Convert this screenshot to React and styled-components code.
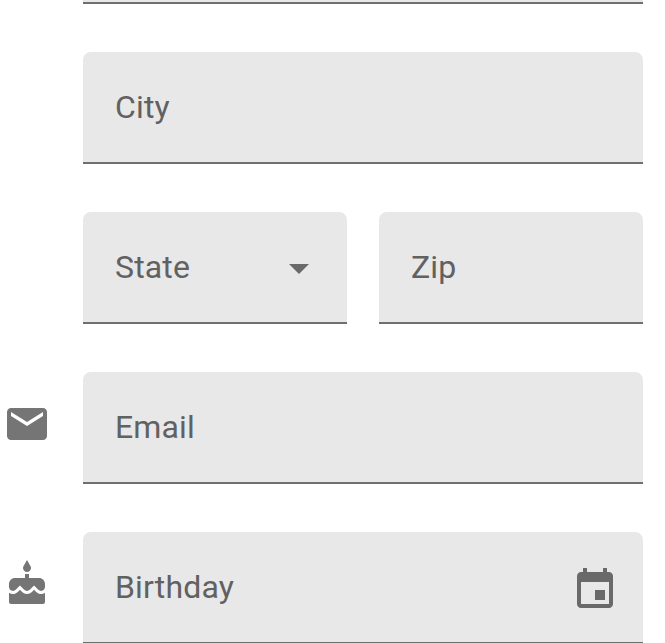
import React from "react";
import styled, { createGlobalStyle } from "styled-components";

const GlobalStyle = createGlobalStyle`
  * { box-sizing: border-box; }
  body { margin: 0; background: #fff; overflow: hidden; font-family: Roboto, "Liberation Sans", sans-serif; }
`;

const Page = styled.main`
  width: 665px;
  height: 643px;
  overflow: hidden;
  background: #fff;
`;

const Form = styled.form`
  display: flex;
  flex-direction: column;
  gap: 48px;
  width: 643px;
`;

const Row = styled.div`
  display: grid;
  grid-template-columns: 83px 1fr;
  flex: none;
`;

const Gutter = styled.div`
  padding: 28px 0 0 3px;
  color: #757575;
`;

const Fields = styled.div`
  display: grid;
  grid-auto-flow: column;
  grid-auto-columns: minmax(0, 1fr);
  gap: 32px;
`;

const Field = styled.div`
  display: flex;
  align-items: center;
  justify-content: space-between;
  height: ${(p) => (p.$clipped ? 4 : 112)}px;
  padding: 0 ${(p) => p.$endPadding ?? 32}px 0 32px;
  background: #e8e8e8;
  border-bottom: 2px solid #6f6f6f;
  border-radius: ${(p) => (p.$clipped ? "0" : "8px 8px 0 0")};
  color: #696969;
`;

const Label = styled.span`
  font-size: 32px;
  line-height: 40px;
  letter-spacing: 0.15px;
  color: #616161;
`;

const Icon = styled.svg`
  display: block;
  width: 48px;
  height: 48px;
  margin-top: ${(p) => p.$drop ?? 0}px;
  fill: currentColor;
`;

const MailIcon = () => (
  <Icon viewBox="0 0 24 24">
    <path d="M20 4H4c-1.1 0-1.99.9-1.99 2L2 18c0 1.1.9 2 2 2h16c1.1 0 2-.9 2-2V6c0-1.1-.9-2-2-2zm0 4l-8 5-8-5V6l8 5 8-5v2z" />
  </Icon>
);

const CakeIcon = () => (
  <Icon viewBox="0 0 24 24">
    <path d="M12 6c1.11 0 2-.9 2-2 0-.38-.1-.73-.29-1.03L12 0l-1.71 2.97c-.19.3-.29.65-.29 1.03 0 1.1.9 2 2 2zm4.6 9.99l-1.07-1.07-1.08 1.07c-1.3 1.3-3.58 1.31-4.89 0l-1.07-1.07-1.09 1.07C6.75 16.64 5.88 17 4.96 17c-.73 0-1.4-.23-1.96-.61V21c0 .55.45 1 1 1h16c.55 0 1-.45 1-1v-4.61c-.56.38-1.23.61-1.96.61-.92 0-1.79-.36-2.44-1.01zM18 9h-5V7h-2v2H6c-1.66 0-3 1.34-3 3v1.54c0 1.08.88 1.96 1.96 1.96.52 0 1.02-.2 1.38-.57l2.14-2.13 2.13 2.13c.74.74 2.03.74 2.77 0l2.14-2.13 2.13 2.13c.37.37.86.57 1.38.57 1.08 0 1.96-.88 1.96-1.96V12C21 10.34 19.66 9 18 9z" />
  </Icon>
);

const EventIcon = () => (
  <Icon viewBox="0 0 24 24" $drop={6}>
    <path d="M17 12h-5v5h5v-5zM16 1v2H8V1H6v2H5c-1.11 0-1.99.9-1.99 2L3 19c0 1.1.89 2 2 2h14c1.1 0 2-.9 2-2V5c0-1.1-.9-2-2-2h-1V1h-2zm3 18H5V8h14v11z" />
  </Icon>
);

const ArrowIcon = () => (
  <Icon viewBox="0 0 24 24" $drop={2}>
    <path d="M7 10l5 5 5-5z" />
  </Icon>
);

export default function App() {
  return (
    <>
      <GlobalStyle />
      <Page>
        <Form>
          <Row>
            <span />
            <Fields><Field $clipped /></Fields>
          </Row>
          <Row>
            <span />
            <Fields><Field><Label>City</Label></Field></Fields>
          </Row>
          <Row>
            <span />
            <Fields>
              <Field $endPadding={24}><Label>State</Label><ArrowIcon /></Field>
              <Field><Label>Zip</Label></Field>
            </Fields>
          </Row>
          <Row>
            <Gutter><MailIcon /></Gutter>
            <Fields><Field><Label>Email</Label></Field></Fields>
          </Row>
          <Row>
            <Gutter><CakeIcon /></Gutter>
            <Fields><Field $endPadding={24}><Label>Birthday</Label><EventIcon /></Field></Fields>
          </Row>
        </Form>
      </Page>
    </>
  );
}
